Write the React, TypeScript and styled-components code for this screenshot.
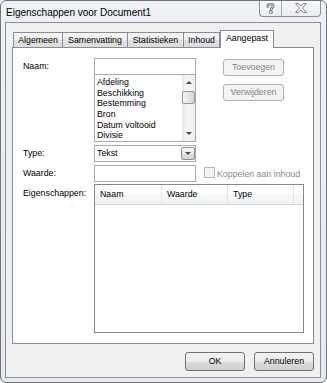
import React from "react";
import styled, { createGlobalStyle, css } from "styled-components";

const GlobalStyle = createGlobalStyle`
  html, body { margin: 0; padding: 0; width: 327px; height: 383px; overflow: hidden; background: #ffffff; }
  body { font-family: "Liberation Sans", Arial, sans-serif; font-size: 8.8px; color: #000; }
  * { box-sizing: border-box; }
`;

const Window = styled.div`
  width: 327px;
  height: 383px;
  border: 1px solid #6f747b;
  border-radius: 6px;
  background: linear-gradient(#eef1f5, #e6eaef);
  display: flex;
  flex-direction: column;
  padding: 0 5px 4px 4px;
  overflow: hidden;
`;

const TitleBar = styled.div`
  height: 21px;
  flex: none;
  display: flex;
  justify-content: space-between;
  align-items: flex-start;
`;

const TitleText = styled.div`
  font-size: 10px;
  line-height: 19px;
  padding: 2px 0 0 1px;
  color: #000;
  white-space: nowrap;
`;

const CaptionButtons = styled.div`
  display: flex;
  margin-top: -1px;
  height: 17px;
  border: 1px solid #8c9096;
  border-top: none;
  border-radius: 0 0 4px 4px;
  background: linear-gradient(#fbfbfc, #e9ecf0);
  overflow: hidden;
`;

const CaptionButton = styled.div<{ $w: number; $divider?: boolean }>`
  width: ${(p) => p.$w}px;
  height: 100%;
  display: flex;
  align-items: center;
  justify-content: center;
  ${(p) =>
    p.$divider &&
    css`
      border-right: 1px solid #a7abb1;
    `}
`;

const Client = styled.div`
  flex: 1;
  border: 1px solid #8b9097;
  background: #f0f0f0;
  display: flex;
  flex-direction: column;
`;

const TabBar = styled.div`
  height: 24px;
  flex: none;
  display: flex;
  align-items: flex-end;
  padding-left: 7px;
`;

const Tab = styled.div<{ $w: number; $active?: boolean }>`
  width: ${(p) => p.$w}px;
  height: 15px;
  border: 1px solid #898c95;
  border-bottom: none;
  margin-left: -1px;
  background: linear-gradient(#f7f7f7, #ececec 50%, #e1e1e1 51%, #dcdcdc);
  text-align: center;
  line-height: 14px;
  white-space: nowrap;
  &:first-child {
    margin-left: 0;
  }
  ${(p) =>
    p.$active &&
    css`
      height: 18px;
      margin-left: 0;
      margin-bottom: -1px;
      background: #ffffff;
      line-height: 15px;
      position: relative;
      z-index: 1;
    `}
`;

const Panel = styled.div`
  margin: 0 6px;
  height: 297px;
  flex: none;
  border: 1px solid #898c95;
  background: #ffffff;
  padding: 10px 9px 0 10px;
`;

const Form = styled.div`
  display: grid;
  grid-template-columns: 71px 102px 1fr;
  row-gap: 3px;
  align-items: start;
`;

const Label = styled.div`
  grid-column: 1;
  line-height: 17px;
  white-space: nowrap;
`;

const FieldStack = styled.div`
  display: flex;
  flex-direction: column;
`;

const TextBox = styled.div`
  height: 17px;
  border: 1px solid #a5acb5;
  background: #ffffff;
`;

const ListBox = styled.div`
  margin-top: -1px;
  height: 68px;
  border: 1px solid #a5acb5;
  background: #ffffff;
  display: flex;
  overflow: hidden;
`;

const ListItems = styled.div`
  flex: 1;
  padding: 2px 0 0 2px;
  line-height: 10.67px;
  white-space: nowrap;
`;

const ScrollBar = styled.div`
  width: 13px;
  flex: none;
  display: flex;
  flex-direction: column;
  background: linear-gradient(90deg, #e6e6e6, #f4f4f4 30%, #f4f4f4 70%, #ebebeb);
`;

const ArrowBox = styled.div`
  height: 15px;
  flex: none;
  display: flex;
  align-items: center;
  justify-content: center;
`;

const Arrow = styled.div<{ $dir: "up" | "down" }>`
  width: 0;
  height: 0;
  border-left: 3px solid transparent;
  border-right: 3px solid transparent;
  ${(p) =>
    p.$dir === "up"
      ? css`
          border-bottom: 3px solid #4a4a4a;
        `
      : css`
          border-top: 3px solid #4a4a4a;
        `}
`;

const Thumb = styled.div`
  height: 13px;
  margin-top: 1px;
  border: 1px solid #979797;
  border-radius: 2px;
  background: linear-gradient(90deg, #f4f4f4, #e6e6e6 50%, #d6d6d6);
`;

const Track = styled.div`
  flex: 1;
`;

const SideButtons = styled.div`
  display: flex;
  flex-direction: column;
  gap: 8px;
  padding-left: 27px;
  margin-top: 1px;
`;

const DisabledButton = styled.div`
  width: 61px;
  height: 17px;
  border: 1px solid #adb2b5;
  border-radius: 3px;
  background: #f4f4f4;
  color: #838383;
  text-align: center;
  line-height: 15px;
`;

const Select = styled.div`
  height: 17px;
  border: 1px solid #a5acb5;
  background: #ffffff;
  display: flex;
  align-items: center;
  padding-left: 2px;
`;

const SelectText = styled.div`
  flex: 1;
  line-height: 15px;
`;

const DropButton = styled.div`
  width: 14px;
  height: 13px;
  border: 1px solid #8e8f8f;
  border-radius: 2px;
  background: linear-gradient(#f4f4f4, #ebebeb 50%, #dddddd 51%, #d3d3d3);
  display: flex;
  align-items: center;
  justify-content: center;
`;

const CheckRow = styled.div`
  grid-column: 3;
  height: 17px;
  display: flex;
  align-items: center;
  gap: 2px;
  padding-left: 8px;
  color: #8a8a8a;
  white-space: nowrap;
`;

const CheckBox = styled.div`
  width: 11px;
  height: 11px;
  margin-top: -2px;
  border: 1px solid #b4b4b4;
  background: #f4f4f4;
`;

const ListView = styled.div`
  grid-column: 2 / 4;
  margin-top: -1px;
  height: 149px;
  border: 1px solid #828790;
  background: #ffffff;
`;

const Header = styled.div`
  display: flex;
  height: 20px;
  border-bottom: 1px solid #d5d5d5;
  background: linear-gradient(#ffffff, #ffffff 45%, #f7f8fa 46%, #f1f2f4);
`;

const HeaderCell = styled.div<{ $w?: number }>`
  ${(p) =>
    p.$w
      ? css`
          width: ${p.$w}px;
          border-right: 1px solid #e3e4e6;
        `
      : css`
          flex: 1;
        `}
  padding-left: 5px;
  line-height: 19px;
  white-space: nowrap;
`;

const Footer = styled.div`
  display: flex;
  justify-content: flex-end;
  gap: 9px;
  padding: 8px 6px 0 0;
`;

const PushButton = styled.div`
  width: 60px;
  height: 19px;
  border: 1px solid #707070;
  border-radius: 3px;
  background: linear-gradient(#f2f2f2, #ebebeb 50%, #dddddd 51%, #cfcfcf);
  text-align: center;
  line-height: 17px;
`;

const HelpIcon = () => (
  <svg width="9" height="11" viewBox="0 0 9 11">
    <path
      d="M1.8 3.4 C1.8 1.6 3.1 1 4.5 1 C6 1 7.2 1.8 7.2 3.2 C7.2 4.8 5 5 5 6.8"
      fill="none"
      stroke="#6c6c6c"
      strokeWidth="2.6"
      strokeLinecap="round"
    />
    <path
      d="M1.8 3.4 C1.8 1.6 3.1 1 4.5 1 C6 1 7.2 1.8 7.2 3.2 C7.2 4.8 5 5 5 6.8"
      fill="none"
      stroke="#f6f6f6"
      strokeWidth="0.9"
      strokeLinecap="round"
    />
    <rect x="3.6" y="7.9" width="2.6" height="2.4" fill="#f6f6f6" stroke="#6c6c6c" strokeWidth="0.8" />
  </svg>
);

const CloseIcon = () => (
  <svg width="12" height="10" viewBox="-0.5 -0.5 13 11">
    <path
      d="M0 0 H3.2 L6 2.8 L8.8 0 H12 L7.6 5 L12 10 H8.8 L6 7.2 L3.2 10 H0 L4.4 5 Z"
      fill="#f6f6f6"
      stroke="#6c6c6c"
      strokeWidth="0.9"
      strokeLinejoin="round"
    />
  </svg>
);

const tabs = [
  { label: "Algemeen", w: 50 },
  { label: "Samenvatting", w: 66 },
  { label: "Statistieken", w: 57 },
  { label: "Inhoud", w: 37 },
  { label: "Aangepast", w: 54, active: true },
];

const items = ["Afdeling", "Beschikking", "Bestemming", "Bron", "Datum voltooid", "Divisie"];

export default function App() {
  return (
    <>
      <GlobalStyle />
      <Window>
        <TitleBar>
          <TitleText>Eigenschappen voor Document1</TitleText>
          <CaptionButtons>
            <CaptionButton $w={22} $divider>
              <HelpIcon />
            </CaptionButton>
            <CaptionButton $w={38}>
              <CloseIcon />
            </CaptionButton>
          </CaptionButtons>
        </TitleBar>
        <Client>
          <TabBar>
            {tabs.map((t) => (
              <Tab key={t.label} $w={t.w} $active={t.active}>
                {t.label}
              </Tab>
            ))}
          </TabBar>
          <Panel>
            <Form>
              <Label>Naam:</Label>
              <FieldStack>
                <TextBox />
                <ListBox>
                  <ListItems>
                    {items.map((i) => (
                      <div key={i}>{i}</div>
                    ))}
                  </ListItems>
                  <ScrollBar>
                    <ArrowBox>
                      <Arrow $dir="up" />
                    </ArrowBox>
                    <Thumb />
                    <Track />
                    <ArrowBox>
                      <Arrow $dir="down" />
                    </ArrowBox>
                  </ScrollBar>
                </ListBox>
              </FieldStack>
              <SideButtons>
                <DisabledButton>Toevoegen</DisabledButton>
                <DisabledButton>Verwijderen</DisabledButton>
              </SideButtons>

              <Label>Type:</Label>
              <Select>
                <SelectText>Tekst</SelectText>
                <DropButton>
                  <Arrow $dir="down" />
                </DropButton>
              </Select>

              <Label>Waarde:</Label>
              <TextBox />
              <CheckRow>
                <CheckBox />
                <span>Koppelen aan inhoud</span>
              </CheckRow>

              <Label>Eigenschappen:</Label>
              <ListView>
                <Header>
                  <HeaderCell $w={67}>Naam</HeaderCell>
                  <HeaderCell $w={66}>Waarde</HeaderCell>
                  <HeaderCell $w={66}>Type</HeaderCell>
                  <HeaderCell />
                </Header>
              </ListView>
            </Form>
          </Panel>
          <Footer>
            <PushButton>OK</PushButton>
            <PushButton>Annuleren</PushButton>
          </Footer>
        </Client>
      </Window>
    </>
  );
}
